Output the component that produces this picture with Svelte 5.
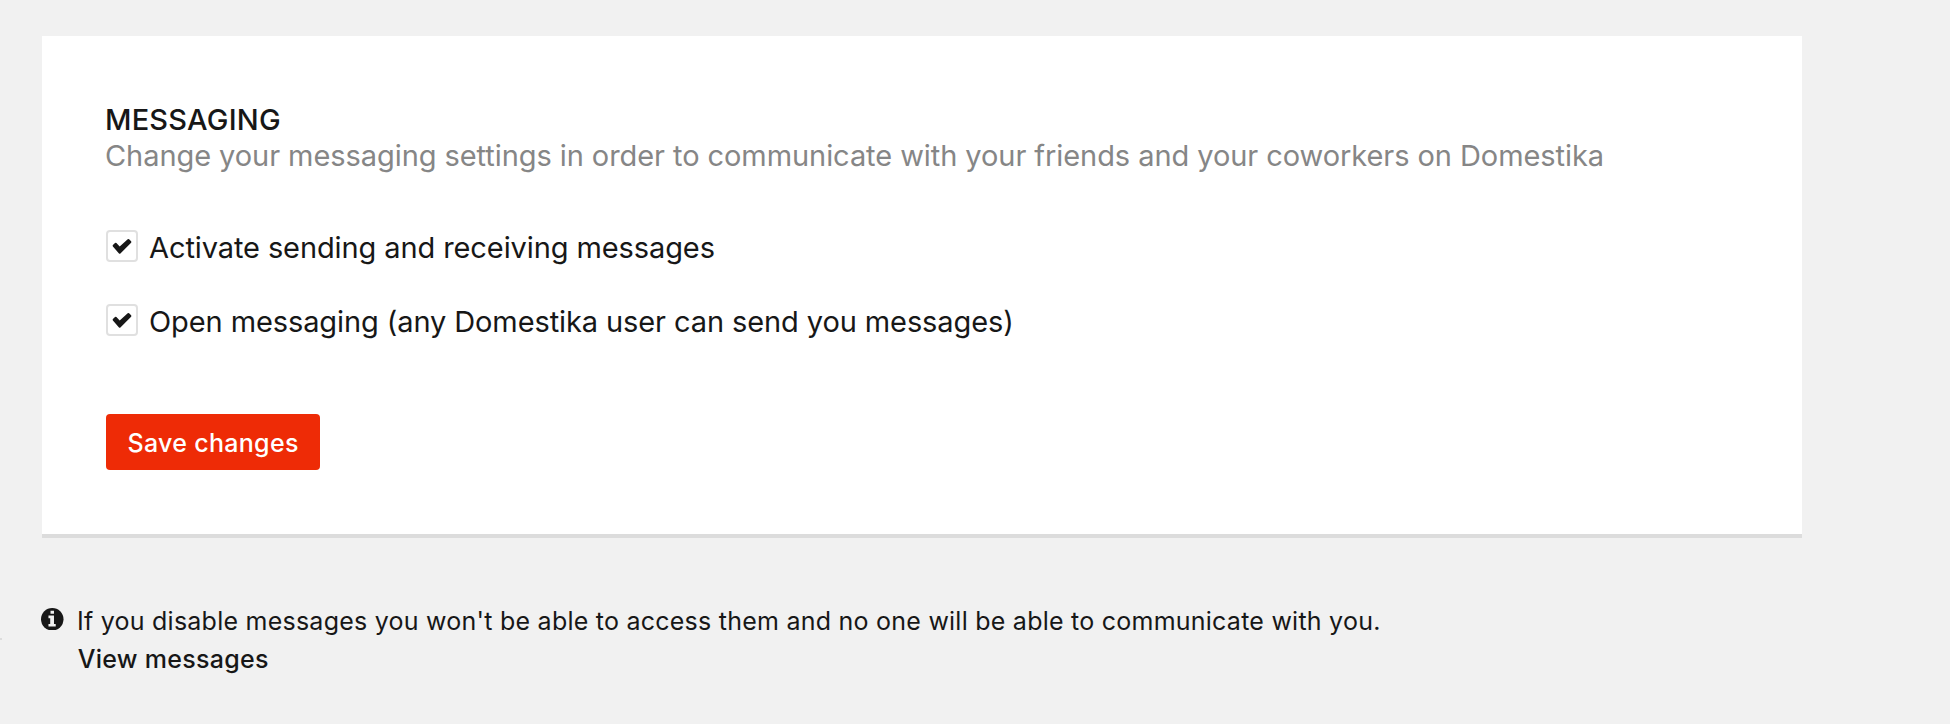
<script>
  let options = $state([
    { id: 'activate', label: 'Activate sending and receiving messages', checked: true },
    { id: 'open', label: 'Open messaging (any Domestika user can send you messages)', checked: true }
  ]);
</script>

<main>
  <section class="card">
    <h1>MESSAGING</h1>
    <p class="lead">Change your messaging settings in order to communicate with your friends and your coworkers on Domestika</p>
    <div class="options">
      {#each options as option (option.id)}
        <label class="option">
          <input type="checkbox" bind:checked={option.checked} />
          <span class="box">
            {#if option.checked}
              <svg viewBox="0 0 28 28" width="28" height="28" aria-hidden="true">
                <path d="M4.9 14.5Q4.3 13.8 4.9 13.1L7 11.1Q7.7 10.5 8.4 11.1L11.7 14.4 19.7 7.3Q20.4 6.7 21.1 7.3L23.1 9.3Q23.7 10 23.1 10.7L12.4 21.4Q11.7 22 11 21.4Z" />
              </svg>
            {/if}
          </span>
          <span class="label">{option.label}</span>
        </label>
      {/each}
    </div>
    <button type="button">Save changes</button>
  </section>

  <aside class="note">
    <svg class="info" viewBox="0 0 22 22" width="22.5" height="22.5" aria-hidden="true">
      <circle cx="11" cy="11" r="11" fill="#171717" />
      <path fill="#f1f1f1" d="M9.3 2.8h3.4v2.9H9.3zM7.3 7.4h5.4v8.2h1.7v2.6H7.3v-2.6H9V10H7.3z" />
    </svg>
    <div class="note-text">
      <p>If you disable messages you won't be able to access them and no one will be able to communicate with you.</p>
      <a href="#messages">View messages</a>
    </div>
  </aside>
  <i class="tick"></i>
</main>

<style>
  :global(body) {
    background: #f1f1f1;
  }
  main {
    box-sizing: border-box;
    position: relative;
    width: 1950px;
    height: 724px;
    padding: 36px 148px 0 42px;
    overflow: hidden;
    background: #f1f1f1;
    color: #171717;
    font-family: Inter, sans-serif;
  }
  .card {
    box-sizing: border-box;
    height: 502px;
    padding: 66px 64px 64px;
    border-bottom: 4px solid #dcdcdc;
    background: #fff;
    font-size: 29px;
    line-height: 36px;
  }
  h1 {
    margin: 0 0 0 -1px;
    font-size: 29px;
    font-weight: 500;
    letter-spacing: 0.2px;
  }
  .lead {
    margin: 0 0 0 -1px;
    color: #868686;
    letter-spacing: -0.07px;
    white-space: nowrap;
  }
  .options {
    display: flex;
    flex-direction: column;
    gap: 38px;
    margin-top: 56px;
  }
  .option {
    display: flex;
    align-items: flex-start;
    gap: 11px;
    height: 36px;
  }
  input {
    position: absolute;
    opacity: 0;
  }
  .box {
    box-sizing: border-box;
    width: 32px;
    height: 32px;
    border: 2px solid #e0e0e0;
    border-radius: 4px;
  }
  .box svg {
    display: block;
  }
  .box path {
    fill: #171717;
  }
  .label {
    letter-spacing: -0.1px;
    white-space: nowrap;
  }
  button {
    display: block;
    box-sizing: border-box;
    width: 214px;
    height: 56px;
    margin-top: 74px;
    padding: 2px 0 0 21.5px;
    border: 0;
    border-radius: 4px;
    background: #ee2b06;
    color: #fff;
    font: 500 25px/54px Inter, sans-serif;
    letter-spacing: 0.3px;
    text-align: left;
    white-space: nowrap;
  }
  .note {
    display: flex;
    align-items: flex-start;
    gap: 13.5px;
    margin: 64px 0 0 -1px;
    font-size: 25px;
    line-height: 38px;
    letter-spacing: 0.24px;
  }
  .info {
    flex: none;
    margin-top: 5.5px;
  }
  .note p {
    margin: 0;
    white-space: nowrap;
  }
  .note a {
    display: block;
    padding-left: 0.7px;
    color: inherit;
    font-weight: 500;
    letter-spacing: 0.28px;
    text-decoration: none;
  }
  .tick {
    position: absolute;
    left: 0;
    top: 638px;
    width: 2px;
    height: 2px;
    background: #dcdcdc;
  }
</style>
